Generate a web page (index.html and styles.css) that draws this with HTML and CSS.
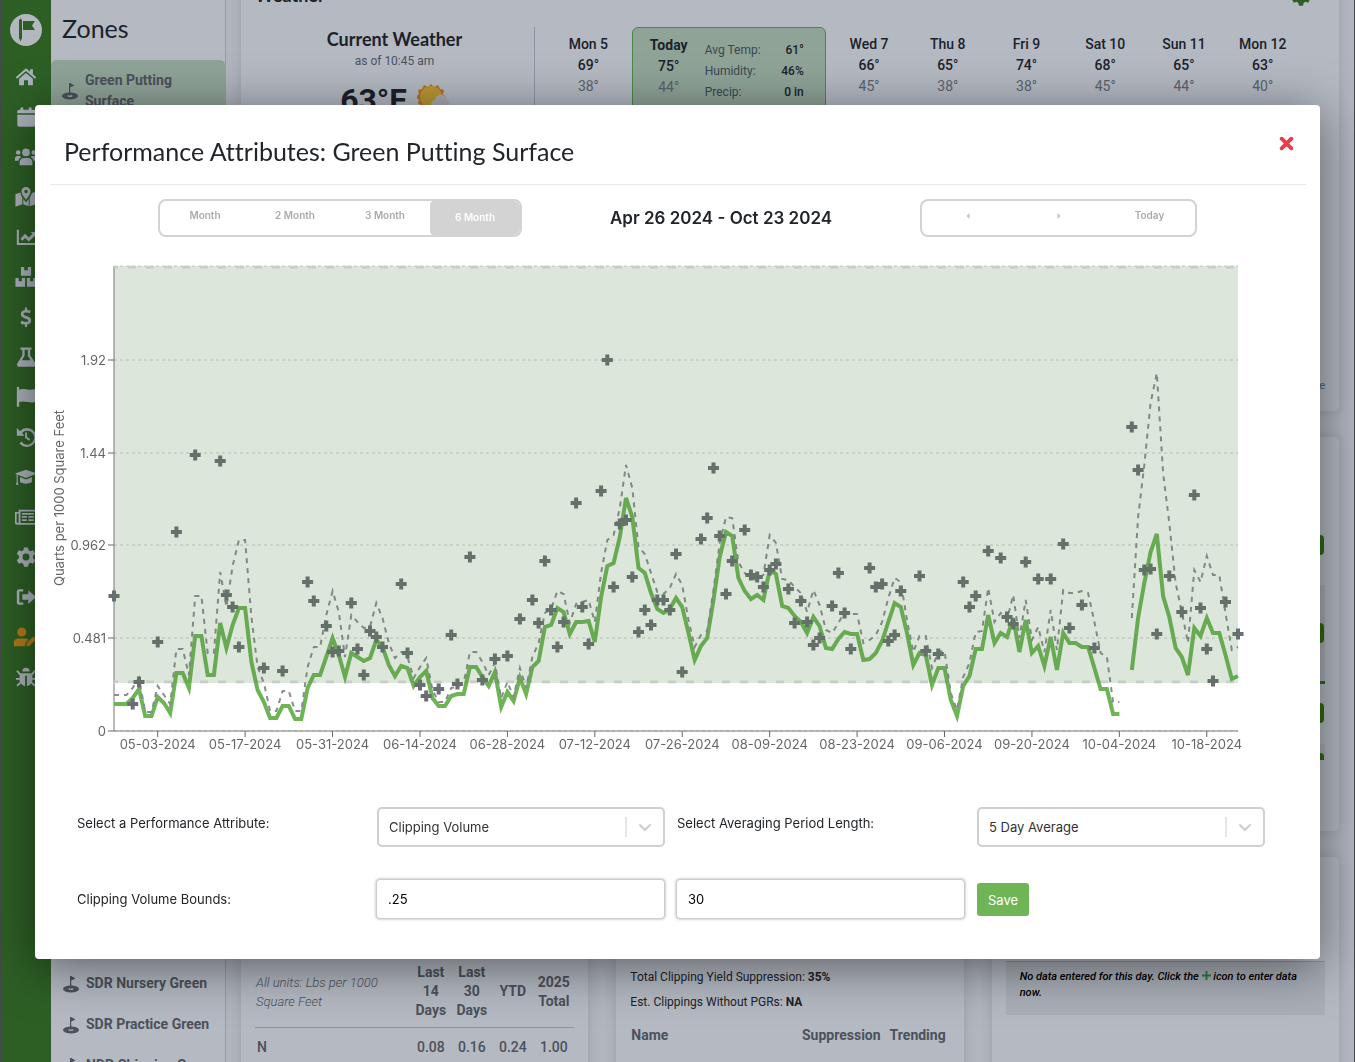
FILE: index.html
```
<!DOCTYPE html>
<html lang="en">
<head>
    <meta charset="UTF-8">
    <meta name="viewport" content="width=device-width, initial-scale=1.0">
    <title>Performance Attributes</title>
    <link rel="stylesheet" href="styles.css">
</head>
<body>
    <svg class="defs" aria-hidden="true">
        <symbol id="pin" viewBox="0 0 16 18">
            <ellipse cx="8" cy="14" rx="8" ry="3.4" fill="#4c515b"/>
            <path d="M7 1h1.2l4.300 2.400-4.300 2.200V14H7z" fill="#4c515b"/>
            <ellipse cx="8" cy="14" rx="2.600" ry="1" fill="#a5abb3"/>
            <path d="M7.200 9h1v5h-1z" fill="#4c515b"/>
        </symbol>
        <symbol id="gear" viewBox="0 0 24 24">
            <path fill-rule="evenodd" d="M9.800 1.500h4.400l.7 3 1.900 1.100 3-.9 2.200 3.800-2.300 2.200v2.600l2.300 2.200-2.200 3.800-3-.9-1.900 1.100-.7 3H9.800l-.7-3-1.900-1.100-3 .9L2 15.500l2.300-2.200v-2.600L2 8.500l2.200-3.800 3 .9 1.900-1.100zM12 8.200a3.800 3.800 0 1 0 0 7.600 3.800 3.800 0 0 0 0-7.600z"/>
        </symbol>
    </svg>

    <div class="page">
        <nav class="sidebar">
            <a href="#" class="logo" aria-label="Home page">
                <svg viewBox="0 0 32 32"><circle cx="16" cy="16" r="16" fill="#b3b8bf"/><path d="M9 6l1.500-1.500L12 6v18l-1.500 3.500L9 24z"/><path d="M13 7h12l-3 4.500L25 16H13z"/></svg>
            </a>
            <a href="#" aria-label="Dashboard"><svg viewBox="0 0 24 24"><path d="M12 2.500L.8 12.200l1.400 1.700L12 5.500l9.800 8.400 1.400-1.700-3.700-3.200V3.500h-3v2.900z"/><path d="M12 7.500l-7.500 6.400V21h5.300v-5.500h4.400V21h5.300v-7.100z"/></svg></a>
            <a href="#" aria-label="Calendar"><svg viewBox="0 0 24 24"><path d="M6 1.500h3V4h6V1.500h3V4h2.500a2 2 0 0 1 2 2v2h-20V6a2 2 0 0 1 2-2H6zM2.500 9.500h20v11a2 2 0 0 1-2 2h-16a2 2 0 0 1-2-2z"/></svg></a>
            <a href="#" aria-label="Team"><svg viewBox="0 0 24 24"><circle cx="12" cy="7" r="4.200"/><circle cx="3.500" cy="7" r="2.500"/><circle cx="20.500" cy="7" r="2.500"/><path d="M5 21v-3c0-3 2-5 5-5h4c3 0 5 2 5 5v3zM0 16v-2c0-2 1-3 3-3h2.500l1.300 1.200C5 13 4 14.500 3.800 16zM24 16v-2c0-2-1-3-3-3h-2.500l-1.300 1.200C19 13 20 14.500 20.200 16z"/></svg></a>
            <a href="#" aria-label="Map"><svg viewBox="0 0 24 24"><path fill-rule="evenodd" d="M12 1a5 5 0 0 0-5 5c0 3 3 6 5 9 2-3 5-6 5-9a5 5 0 0 0-5-5zm0 3.200a1.900 1.900 0 1 1 0 3.800 1.900 1.900 0 0 1 0-3.800z"/><path d="M.5 9l5.300-2c.3 2 1.200 3.800 2.200 5.500V20L.5 22.500zM9 14l3 4 3-4v8l-6-2zM16 22V12.500c1-1.500 2-3 2.400-5L23.500 6v13.500z"/></svg></a>
            <a href="#" aria-label="Reports"><svg viewBox="0 0 24 24"><path d="M2 4h2.200v14.500H23v2.300H2z"/><path d="M6 14l5-5.500 4 4 4-4-2-2h6.500V13l-2-2-6.500 6-4-4-3 3.200z"/></svg></a>
            <a href="#" aria-label="Inventory"><svg viewBox="0 0 24 24"><path d="M6.500 1H10v3.500h4V1h3.500v9.500h-11zM.5 13H4v3.500h3.500V13H11v9.500H.5zM13 13h3.500v3.500H20V13h3.500v9.500H13z"/></svg></a>
            <a href="#" aria-label="Budget"><svg viewBox="0 0 24 24"><path d="M10.800 1.500h2.400v2.800c1.500.1 2.800.5 4 1l-1 2.700c-1.400-.6-2.700-.9-4-.9-2 0-2.900.6-2.900 1.600 0 1.200 1.500 1.600 3.500 2.300 2.700.9 4.800 2 4.800 4.700 0 2.300-1.500 4-4.400 4.500v2.600h-2.400v-2.500c-1.800-.1-3.500-.6-4.800-1.300l1-2.800c1.500.8 3.100 1.300 4.800 1.300 1.800 0 2.700-.6 2.700-1.600 0-1.200-1.400-1.700-3.500-2.400C8.300 12.600 6.300 11.500 6.300 9c0-2.300 1.600-4 4.500-4.600z"/></svg></a>
            <a href="#" aria-label="Lab"><svg viewBox="0 0 24 24"><path fill-rule="evenodd" d="M6 1.500h12V4h-1.500v6l6 9c.8 1.800 0 3.500-2 3.500h-16c-2 0-2.800-1.700-2-3.500L8 10V4H6zM10.500 4v6.500L7.500 15.500h9.500L14 10.500V4z"/></svg></a>
            <a href="#" aria-label="Flags"><svg viewBox="0 0 24 24"><path d="M2 2a1.300 1.300 0 0 1 2.600 0v2c5-2.500 9.500 1.800 18.900-1v13.800c-7.500 3-11.500-1.500-18.900.7v5H2z"/></svg></a>
            <a href="#" aria-label="History"><svg viewBox="0 0 24 24"><path d="M2 2v8.500h8.500L7.600 7.700A7.600 7.600 0 1 1 7 17l-2 2A10.300 10.300 0 1 0 5.400 5.600z"/><path d="M11 7h2.200v5l3.500 2.300-1.200 1.900-4.500-3z"/></svg></a>
            <a href="#" aria-label="Training"><svg viewBox="0 0 24 24"><path d="M12 4l12 4.200L12 13 3 9.500v8l1 3H1l.8-3V9L0 8.200zM5.500 12l6.500 2.600 6.500-2.600v5.500c-3.500 2.500-9.500 2.500-13 0z"/></svg></a>
            <a href="#" aria-label="News"><svg viewBox="0 0 24 24"><path fill-rule="evenodd" d="M4 4h20v16.500H2.500C1 20.500 0 19.500 0 18V6.500h4zM1.800 8.300V18c0 .6 2.200.6 2.200 0V8.300zM6 6v12.500h16V6zM7.500 7.500h13v2h-13zM7.500 11H13v1.800H7.500zM14.500 11h6v1.800h-6zM7.500 14.500H13v1.800H7.500zM14.500 14.500h6v1.800h-6z"/></svg></a>
            <a href="#" aria-label="Settings"><svg><use href="#gear"/></svg></a>
            <a href="#" aria-label="Log out"><svg viewBox="0 0 24 24"><path d="M9 3.500v2.600H4.700V18H9v2.500H4.500c-1.500 0-2.500-1-2.500-2.500V6c0-1.500 1-2.500 2.500-2.500zM14.500 4.500L23 12l-8.500 7.500V15H8V9h6.500z"/></svg></a>
            <a href="#" class="account" aria-label="Account"><svg viewBox="0 0 24 24"><circle cx="8.500" cy="6.500" r="5"/><path d="M0 22v-4c0-3 2-4.500 5-4.500h7c1.500 0 3 .5 4 1.500l-3.500 3.500L12 22zM13.500 22l.5-3.500 7-7 3 3-7 7z"/></svg></a>
            <a href="#" aria-label="Report a bug"><svg viewBox="0 0 24 24"><path d="M8 6a4 4 0 0 1 8 0zM6 8h12l3-3.500 1.600 1.300L19 10v3h4v2h-4c0 1 0 1.500-.4 2.400l3.900 3.400-1.500 1.500-3.500-3.200A7 7 0 0 1 13 22V10.500h-2V22a7 7 0 0 1-4.500-2.900L3 22.300l-1.500-1.500 3.900-3.400C5 16.500 5 16 5 15H1v-2h4v-3L1.400 5.800 3 4.500z"/></svg></a>
        </nav>

        <aside class="zones">
            <h2>Zones</h2>
            <a href="#" class="zone active"><svg><use href="#pin"/></svg><span>Green Putting Surface</span></a>
            <div class="zone-list">
                <a href="#" class="zone"><svg><use href="#pin"/></svg><span>SDR Nursery Green</span></a>
                <a href="#" class="zone"><svg><use href="#pin"/></svg><span>SDR Practice Green</span></a>
                <a href="#" class="zone"><svg><use href="#pin"/></svg><span>NDR Chipping G</span></a>
            </div>
        </aside>

        <main class="main">
            <section class="card weather">
                <div class="card-head">
                    <h3>Weather</h3>
                    <svg class="head-gear"><use href="#gear"/></svg>
                </div>
                <div class="weather-row">
                    <div class="current">
                        <h4>Current Weather</h4>
                        <p>as of 10:45 am</p>
                        <div class="temp">63°F
                            <svg viewBox="0 0 32 32"><path d="M14 1l3 3 4-2 2 4 4 1-1 4 3 3-3 3 1 4-4 1-2 4-4-2-3 3-3-3-4 2-2-4-4-1 1-4-3-3 3-3-1-4 4-1 2-4 4 2z" fill="#b86d28"/><circle cx="14" cy="14" r="11" fill="#b99734"/><path d="M15 25a5 5 0 0 1 3-8 6 6 0 0 1 12 1 4 4 0 0 1 0 9H18z" fill="#a9adb5"/></svg>
                        </div>
                    </div>
                    <div class="days">
                        <div class="day"><b>Mon 5</b><strong>69°</strong><span>38°</span></div>
                        <div class="today">
                            <div class="day"><b>Today</b><strong>75°</strong><span>44°</span></div>
                            <dl>
                                <dt>Avg Temp:</dt><dd>61°</dd>
                                <dt>Humidity:</dt><dd>46%</dd>
                                <dt>Precip:</dt><dd>0 in</dd>
                            </dl>
                        </div>
                        <div class="day"><b>Wed 7</b><strong>66°</strong><span>45°</span></div>
                        <div class="day"><b>Thu 8</b><strong>65°</strong><span>38°</span></div>
                        <div class="day"><b>Fri 9</b><strong>74°</strong><span>38°</span></div>
                        <div class="day"><b>Sat 10</b><strong>68°</strong><span>45°</span></div>
                        <div class="day"><b>Sun 11</b><strong>65°</strong><span>44°</span></div>
                        <div class="day"><b>Mon 12</b><strong>63°</strong><span>40°</span></div>
                    </div>
                </div>
                <a href="#" class="more">e</a>
            </section>

            <div class="cards middle">
                <section class="card"></section>
                <section class="card"></section>
                <section class="card bars">
                    <div class="bar-row"><i></i></div>
                    <div class="bar-row shaded"><i></i></div>
                    <div class="bar-row ruled"><i></i></div>
                    <div class="bar-row half"><i></i></div>
                </section>
            </div>

            <div class="cards bottom">
                <section class="card">
                    <table class="nutrients">
                        <thead>
                            <tr><th class="note">All units: Lbs per 1000 Square Feet</th><th>Last 14 Days</th><th>Last 30 Days</th><th>YTD</th><th>2025 Total</th></tr>
                        </thead>
                        <tbody>
                            <tr><th>N</th><td>0.08</td><td>0.16</td><td>0.24</td><td>1.00</td></tr>
                        </tbody>
                    </table>
                </section>
                <section class="card growth">
                    <p>Total Clipping Yield Suppression: <b>35%</b></p>
                    <p>Est. Clippings Without PGRs: <b>NA</b></p>
                    <div class="growth-head"><b>Name</b><b>Suppression</b><b>Trending</b></div>
                </section>
                <section class="card">
                    <p class="empty">No data entered for this day. Click the <svg viewBox="0 0 10 10"><path d="M5 0v10M0 5h10" stroke="#2f7d3c" stroke-width="2"/></svg> icon to enter data now.</p>
                </section>
            </div>
        </main>
    </div>

    <div class="overlay">
        <div class="modal" role="dialog" aria-labelledby="modalTitle">
            <header class="modal-head">
                <h1 id="modalTitle">Performance Attributes: Green Putting Surface</h1>
                <button class="close" aria-label="Close"><svg viewBox="0 0 14 14"><path d="M2.500 2.500l9 9M11.500 2.500l-9 9" stroke="#eb3b4d" stroke-width="3.600" stroke-linecap="round"/></svg></button>
            </header>

            <div class="toolbar">
                <div class="group">
                    <button>Month</button>
                    <button>2 Month</button>
                    <button>3 Month</button>
                    <button class="selected">6 Month</button>
                </div>
                <h2>Apr 26 2024 - Oct 23 2024</h2>
                <div class="group pager">
                    <button aria-label="Previous"><svg viewBox="0 0 4 6"><path d="M3.500 0v6L.5 3z"/></svg></button>
                    <button aria-label="Next"><svg viewBox="0 0 4 6"><path d="M.5 0v6l3-3z"/></svg></button>
                    <button>Today</button>
                </div>
            </div>

            <svg class="chart" id="chart" viewBox="50 256 1256 504" role="img" aria-label="Clipping volume"></svg>

            <form class="form">
                <label for="attribute">Select a Performance Attribute:</label>
                <div class="select">
                    <select id="attribute"><option>Clipping Volume</option></select>
                    <svg viewBox="0 0 40 20"><path d="M1 0v20" stroke="#ccc"/><path d="M15 8l5 5 5-5" stroke="#ccc" stroke-width="2" stroke-linecap="round" fill="none"/></svg>
                </div>
                <label for="period">Select Averaging Period Length:</label>
                <div class="select">
                    <select id="period"><option>5 Day Average</option></select>
                    <svg viewBox="0 0 40 20"><path d="M1 0v20" stroke="#ccc"/><path d="M15 8l5 5 5-5" stroke="#ccc" stroke-width="2" stroke-linecap="round" fill="none"/></svg>
                </div>
                <label for="lower" class="bounds">Clipping Volume Bounds:</label>
                <div class="field"><input id="lower" type="text" value=".25"></div>
                <div class="field"><input type="text" value="30" aria-label="Upper bound"></div>
                <div class="actions"><button type="button" class="save">Save</button></div>
            </form>
        </div>
    </div>
    <script src="chart.js"></script>
</body>
</html>
```
FILE: styles.css
```
* {
    box-sizing: border-box;
}

body {
    margin: 0;
    height: 100vh;
    overflow: hidden;
    background-color: #b0b5be;
    border-left: 1px solid #45484d;
    border-right: 1px solid #45484d;
    font-family: Roboto, sans-serif;
    color: #1c222a;
}

h1, h2, h3, h4, p, dl, dd {
    margin: 0;
}

a {
    color: inherit;
    text-decoration: none;
}

.defs {
    display: none;
}

.page {
    display: flex;
    height: 100vh;
    overflow: hidden;
}

/* sidebar */
.sidebar {
    width: 50px;
    flex-shrink: 0;
    background-color: #2d5f25;
    display: flex;
    flex-direction: column;
    align-items: center;
    padding-top: 14px;
}

.sidebar a {
    height: 40px;
    display: flex;
    align-items: center;
    flex-shrink: 0;
}

.sidebar svg {
    width: 22px;
    height: 22px;
    fill: #adb3bd;
}

.sidebar .logo {
    height: 43px;
    align-items: flex-start;
}

.sidebar .logo svg {
    width: 32px;
    height: 32px;
    fill: #2d5f25;
}

.sidebar .account {
    padding-right: 2px;
}

.sidebar .account svg {
    fill: #b57b17;
}

/* zones */
.zones {
    width: 175px;
    flex-shrink: 0;
    background-color: #b4b9c2;
    border-right: 1px solid #979ca5;
    display: flex;
    flex-direction: column;
}

.zones h2 {
    font-family: Lato, sans-serif;
    font-size: 25px;
    font-weight: 400;
    line-height: 30px;
    padding: 13px 10px 17px 11px;
}

.zone {
    display: flex;
    align-items: center;
    gap: 7px;
    padding: 10px 10px 10px 12px;
    font-size: 14px;
    font-weight: 700;
    line-height: 21px;
    color: #4c515b;
}

.zone svg {
    width: 16px;
    height: 18px;
    flex-shrink: 0;
}

.zone.active {
    background-color: #8fa397;
    border-radius: 5px 5px 0 0;
    padding: 10px 11px;
}

.zone-list {
    margin-top: 841px;
}

/* main content */
.main {
    flex: 1;
    padding: 0 15px;
    margin-top: -20px;
    display: flex;
    flex-direction: column;
    gap: 26px;
}

.card {
    background-color: #b4b9c2;
    border-radius: 5px;
    box-shadow: 0 0 12px rgba(0, 0, 0, 0.12);
    padding: 0 14px;
}

.card-head {
    display: flex;
    justify-content: space-between;
    padding: 4px 13px 0 0;
}

.card-head h3 {
    font-family: Lato, sans-serif;
    font-size: 18px;
    line-height: 22px;
}

.head-gear {
    width: 22px;
    height: 24px;
    fill: #2d5f25;
}

.weather {
    height: 431px;
    flex-shrink: 0;
    display: flex;
    flex-direction: column;
}

.weather-row {
    display: flex;
    padding-top: 19px;
    flex: 1;
}

.current {
    width: 280px;
    border-right: 1px solid #8f959f;
    text-align: center;
}

.current h4 {
    font-family: Lato, sans-serif;
    font-size: 18px;
    line-height: 24px;
}

.current p {
    font-size: 12px;
    line-height: 20px;
    color: #4c5460;
}

.temp {
    display: flex;
    justify-content: center;
    gap: 10px;
    padding-top: 12px;
    font-size: 32px;
    font-weight: 700;
    line-height: 34px;
}

.temp svg {
    width: 32px;
    height: 32px;
}

.days {
    flex: 1;
    display: flex;
    padding: 0 23px 0 14px;
}

.day {
    flex: 1;
    display: flex;
    flex-direction: column;
    align-items: center;
    padding-top: 7px;
    font-size: 14px;
    line-height: 21px;
}

.day b, .day strong {
    font-weight: 500;
}

.day span {
    color: #5a626e;
}

.today {
    width: 194px;
    display: flex;
    margin: 0 4px;
    background-color: #8fa397;
    border: 1px solid #4b874b;
    border-radius: 6px;
}

.today .day b {
    font-weight: 700;
}

.today dl {
    width: 120px;
    padding: 12px 21px 0 0;
    display: grid;
    grid-template-columns: 1fr auto;
    grid-auto-rows: 21px;
    font-size: 12px;
    line-height: 21px;
}

.today dt {
    color: #3c4850;
}

.today dd {
    text-align: right;
    font-weight: 500;
}

.more {
    align-self: flex-end;
    font-size: 11px;
    line-height: 16px;
    padding-bottom: 17px;
    color: #46618c;
}

.cards {
    display: grid;
    grid-template-columns: repeat(3, 1fr);
    gap: 28px;
    flex-shrink: 0;
}

.middle .card {
    height: 394px;
}

.middle .bars {
    padding-top: 90px;
}

.bar-row {
    height: 58px;
    display: flex;
    justify-content: flex-end;
    padding: 8px 1px 0 0;
    overflow: hidden;
}

.bar-row i {
    width: 160px;
    height: 20px;
    border-radius: 4px;
    background-color: #2f6b12;
    flex-shrink: 0;
}

.bar-row.shaded {
    height: 99px;
    padding-top: 38px;
    background-color: #a9aeb7;
    border-bottom: 3px solid #2f6b12;
}

.bar-row.ruled {
    height: 60px;
    padding-top: 19px;
}

.bar-row.half {
    height: 16px;
    padding-top: 9px;
    background-color: #a9aeb7;
}

.bottom .card {
    height: 300px;
    padding-top: 100px;
}

.nutrients {
    width: 100%;
    table-layout: fixed;
    border-collapse: collapse;
    color: #4c515b;
    font-size: 14px;
    line-height: 19px;
}

.nutrients th, .nutrients td {
    padding: 6px 2px 7px;
    text-align: center;
    width: 41px;
}

.nutrients thead th {
    border-bottom: 1px solid #8f959f;
}

.nutrients tbody td {
    padding-top: 10px;
    font-weight: 500;
}

.nutrients tbody th {
    text-align: left;
    padding-top: 10px;
    font-weight: 500;
}

.nutrients .note {
    width: auto;
    text-align: left;
    font-size: 13px;
    font-weight: 300;
    font-style: italic;
    padding-right: 26px;
    padding-left: 1px;
}

.bottom .growth {
    padding-top: 108px;
}

.growth p {
    font-size: 12px;
    line-height: 25px;
}

.growth-head {
    display: grid;
    grid-template-columns: 1fr auto auto;
    gap: 9px;
    padding: 10px 4px 0 1px;
    font-size: 14px;
    line-height: 20px;
    color: #4c515b;
}

.empty {
    border-top: 1px solid #8f959f;
    background-color: #a9aeb7;
    margin-top: 4px;
    padding: 7px 14px 14px;
    font-size: 11px;
    font-style: italic;
    font-weight: 500;
    line-height: 16px;
    color: #000;
}

.empty svg {
    width: 9px;
    height: 9px;
}

/* modal */
.overlay {
    position: fixed;
    inset: 0;
    padding: 105px 35px;
}

.modal {
    background-color: #fff;
    border-radius: 4px;
    box-shadow: 0 8px 50px rgba(0, 0, 0, 0.5);
    padding: 15px 14px 39px 15px;
    font-family: Inter, sans-serif;
    color: #212529;
}

.modal-head {
    display: flex;
    justify-content: space-between;
    align-items: flex-start;
    padding: 14px 12px 15px 14px;
    border-bottom: 1px solid #eaeaea;
}

.modal-head h1 {
    font-family: Lato, sans-serif;
    font-size: 25px;
    font-weight: 400;
    font-variant-ligatures: none;
    line-height: 35px;
}

.close {
    border: none;
    background: none;
    padding: 2px 0;
    cursor: pointer;
}

.close svg {
    width: 15px;
    height: 15px;
    display: block;
}

.toolbar {
    display: flex;
    justify-content: space-between;
    align-items: center;
    padding: 14px 109px 19px 108px;
}

.toolbar h2 {
    font-size: 17px;
    font-weight: 600;
}

.group {
    display: flex;
    height: 38px;
    border: 2px solid #d3d3d3;
    border-radius: 8px;
    overflow: hidden;
}

.group button {
    width: 90px;
    border: none;
    background: none;
    padding: 0 0 7px;
    font-family: Inter, sans-serif;
    font-size: 10px;
    font-weight: 600;
    color: #aaa;
    cursor: pointer;
}

.pager button {
    width: 91px;
}

.group svg {
    width: 4px;
    height: 6px;
    fill: #c4c4c4;
}

.group .selected {
    background-color: #d3d3d3;
    border-radius: 4px 0 0 4px;
    padding-bottom: 3px;
    color: #fff;
}

.chart {
    display: block;
    width: 100%;
    height: auto;
}

.chart text {
    font-size: 13px;
    fill: #666;
}

.form {
    display: grid;
    grid-template-columns: repeat(4, 1fr);
    row-gap: 32px;
    margin: 47px 41px 0 15px;
    font-size: 14px;
}

.form label {
    font-size: 13px;
    line-height: 20px;
    padding: 6px 12px;
}

.form .bounds {
    padding-top: 10px;
}

.select {
    position: relative;
    padding-left: 12px;
}

.select select {
    width: 100%;
    height: 40px;
    appearance: none;
    border: 2px solid #d0d0d0;
    border-radius: 5px;
    background-color: #fff;
    padding: 0 10px;
    font-family: Inter, sans-serif;
    font-size: 13px;
    color: #333;
}

.select svg {
    position: absolute;
    right: 0;
    top: 10px;
    width: 40px;
    height: 20px;
    pointer-events: none;
}

.field {
    padding-left: 11px;
}

.field input {
    width: 100%;
    height: 40px;
    border: 1px solid #ccc;
    border-radius: 4px;
    box-shadow: 0 0 3px rgba(0, 0, 0, 0.35);
    padding: 0 11px;
    font-family: Inter, sans-serif;
    font-size: 13px;
    color: #000;
}

.actions {
    padding: 4px 12px;
}

.save {
    height: 33px;
    padding: 0 11px;
    border: none;
    border-radius: 3px;
    background-color: #6fb556;
    color: #fff;
    font-family: Inter, sans-serif;
    font-size: 13px;
    cursor: pointer;
}
```
FILE: chart.js
```
const chart = document.getElementById('chart');
const LEFT = 114, RIGHT = 1238, TOP = 266, BOTTOM = 731, DAYS = 180;

// one y per day, null is a gap
const average = [
    704, 704, 704, 698, 689, 716, 716, 697, 703, 713, 673, 673, 688, 636, 636, 675, 675, 623, 648, 625,
    608, 608, 662, 690, 702, 718, 718, 706, 706, 719, 719, 688, 675, 675, 657, 638, 655, 677, 653, 657,
    661, 658, 640, 647, 665, 676, 666, 668, 686, 677, 671, 698, 706, 706, 696, 694, 694, 667, 667, 677,
    686, 672, 707, 692, 701, 678, 694, 667, 661, 627, 625, 608, 612, 634, 622, 622, 621, 642, 597, 566,
    563, 537, 498, 517, 568, 573, 593, 609, 613, 609, 598, 607, 633, 660, 646, 638, 600, 557, 532, 536,
    578, 591, 599, 595, 600, 570, 574, 606, 608, 616, 622, 633, 617, 626, 648, 649, 639, 632, 634, 634,
    660, 659, 653, 641, 622, 603, 607, 633, 665, 653, 655, 685, 668, 668, 700, 716, 686, 676, 649, 649,
    615, 643, 633, 637, 618, 652, 620, 653, 646, 666, 637, 670, 633, 643, 643, 647, 647, 668, 689, 689,
    714, 714, null, 670, 618, 583, 552, 534, 596, 617, 648, 657, 675, 628, 636, 618, 633, 633, 655, 679, 676
];

const upper = [
    695, 695, 695, 688, 678, 712, 712, 686, 695, 704, 649, 649, 675, 596, 596, 653, 653, 572, 607, 566,
    540, 540, 617, 667, 683, 711, 711, 691, 691, 711, 711, 667, 647, 647, 615, 591, 612, 657, 615, 622,
    628, 627, 603, 618, 643, 658, 652, 657, 678, 667, 658, 690, 702, 702, 688, 687, 683, 652, 652, 662,
    675, 663, 698, 682, 697, 668, 688, 657, 643, 613, 609, 591, 594, 623, 604, 602, 600, 622, 573, 540,
    535, 508, 465, 488, 547, 554, 573, 592, 594, 588, 574, 585, 620, 647, 635, 631, 590, 543, 517, 518,
    562, 573, 579, 580, 575, 535, 543, 579, 580, 587, 593, 612, 590, 605, 630, 633, 623, 612, 614, 614,
    643, 640, 635, 622, 598, 578, 582, 620, 652, 636, 636, 668, 652, 651, 693, 710, 677, 663, 632, 631,
    588, 622, 613, 620, 595, 638, 600, 640, 627, 652, 610, 650, 590, 593, 593, 591, 593, 622, 653, 657,
    702, 702, null, 618, 517, 465, 403, 373, 473, 523, 583, 612, 643, 570, 582, 556, 575, 575, 613, 650, 647
];

// measured values: [day, y]
const samples = [
    [0, 596], [3, 704], [4, 682], [7, 642], [10, 532], [13, 455], [17, 461], [18, 595], [19, 607], [20, 647],
    [24, 668], [27, 671], [31, 582], [32, 601], [34, 626], [35, 652], [36, 651], [38, 603], [39, 649], [40, 675],
    [41, 631], [42, 637], [43, 647], [46, 584], [47, 653], [49, 685], [50, 696], [52, 689], [54, 635], [55, 684],
    [57, 557], [59, 680], [61, 659], [63, 656], [65, 619], [67, 600], [68, 623], [69, 561], [70, 610], [71, 647],
    [72, 622], [74, 503], [75, 607], [76, 644], [78, 491], [79, 360], [80, 587], [81, 524], [82, 520], [83, 577],
    [84, 632], [85, 610], [86, 625], [87, 600], [88, 600], [89, 610], [90, 554], [91, 672], [94, 539], [95, 518],
    [96, 468], [97, 536], [98, 594], [99, 561], [101, 530], [102, 575], [103, 577], [104, 587], [105, 570],
    [106, 564], [108, 589], [109, 623], [110, 601], [111, 622], [112, 645], [113, 638], [115, 606], [116, 573],
    [117, 613], [118, 649], [121, 568], [122, 587], [123, 584], [124, 641], [125, 635], [126, 591], [129, 576],
    [130, 651], [132, 654], [136, 582], [137, 607], [138, 596], [140, 551], [142, 558], [143, 617], [144, 624],
    [146, 562], [148, 579], [150, 579], [152, 544], [153, 628], [155, 605], [157, 648], [163, 427], [164, 470],
    [165, 570], [166, 569], [167, 634], [169, 576], [171, 612], [173, 495], [174, 608], [175, 649], [176, 681],
    [178, 602], [180, 634]
];

const yTicks = [['1.92', 360], ['1.44', 453], ['0.962', 545], ['0.481', 638], ['0', 731]];
const xTicks = ['05-03', '05-17', '05-31', '06-14', '06-28', '07-12', '07-26', '08-09', '08-23', '09-06', '09-20', '10-04', '10-18'];

function dayX(day) {
    return LEFT + day * (RIGHT - LEFT) / DAYS;
}

function linePath(values) {
    let d = '';
    let pen = 'M';
    values.forEach((y, day) => {
        if (y === null) {
            pen = 'M';
            return;
        }
        d += `${pen}${dayX(day).toFixed(1)} ${y}`;
        pen = 'L';
    });
    return d;
}

let out = '';

// grid and axes
out += `<path d="M${LEFT} ${TOP}H${RIGHT}" stroke="#ccc" stroke-dasharray="3 3"/>`;
yTicks.forEach(([label, y]) => {
    out += `<path d="M${LEFT} ${y}H${RIGHT}" stroke="#ccc" stroke-dasharray="3 3"/>`;
    out += `<path d="M${LEFT - 6} ${y}H${LEFT}" stroke="#666"/>`;
    out += `<text x="${LEFT - 8}" y="${y + 5}" text-anchor="end">${label}</text>`;
});
out += `<path d="M${LEFT} ${TOP}V${BOTTOM}H${RIGHT}" fill="none" stroke="#777"/>`;
xTicks.forEach((label, i) => {
    const x = dayX(7 + i * 14);
    out += `<path d="M${x} ${BOTTOM}v6" stroke="#666"/>`;
    out += `<text x="${x}" y="749" text-anchor="middle">${label}-2024</text>`;
});
out += `<text transform="translate(64 498) rotate(-90)" text-anchor="middle">Quarts per 1000 Square Feet</text>`;

// bounds
out += `<path d="M${LEFT} 267H${RIGHT}M${LEFT} 682H${RIGHT}" stroke="#e8e0ea" stroke-width="3" stroke-dasharray="8 10" stroke-dashoffset="4"/>`;

out += `<path d="${linePath(average)}" fill="none" stroke="#6db554" stroke-width="4"/>`;
out += `<path d="${linePath(upper)}" fill="none" stroke="#8a8c93" stroke-width="2" stroke-dasharray="5 5"/>`;
samples.forEach(([day, y]) => {
    out += `<path d="M${(dayX(day) - 5.5).toFixed(1)} ${y}h11m-5.500 -5.500v11" stroke="#6a6d73" stroke-width="4"/>`;
});
out += `<rect x="${LEFT}" y="${TOP}" width="${RIGHT - LEFT}" height="417" fill="rgb(80, 130, 70)" fill-opacity="0.2"/>`;

chart.innerHTML = out;
```
